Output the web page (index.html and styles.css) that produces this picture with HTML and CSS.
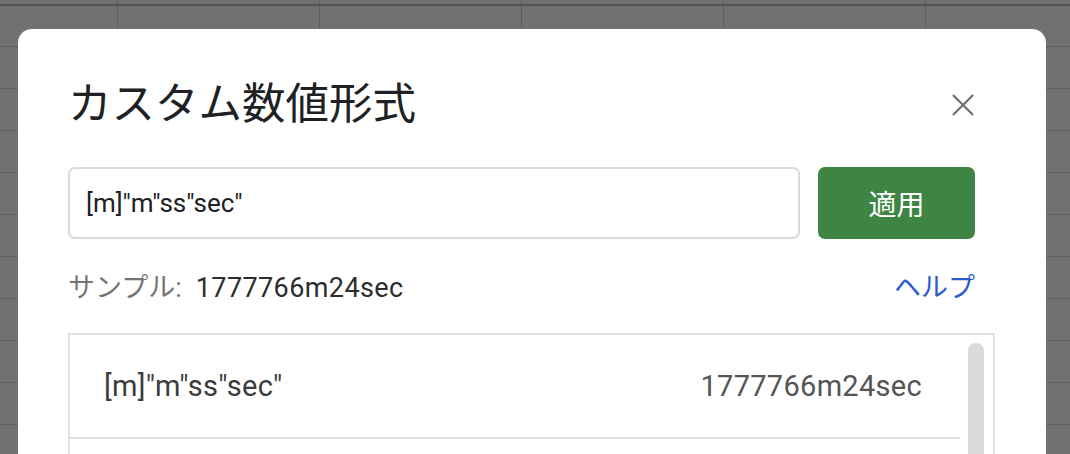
FILE: index.html
```html
<!DOCTYPE html>
<html lang="ja">
<head>
  <meta charset="UTF-8" />
  <meta name="viewport" content="width=device-width, initial-scale=1.0"/>
  <title>カスタム数値形式</title>
  <link rel="stylesheet" href="styles.css">
</head>
<body>
  <div class="sheet">
    <div class="dialog">
      <div class="dialog-head">
        <h1 class="dialog-title">カスタム数値形式</h1>
        <button class="close-btn" aria-label="閉じる">
          <svg width="24" height="24" viewBox="0 0 24 24">
            <path d="M1 1L23 23M23 1L1 23" stroke="#6b6b6b" stroke-width="2.2" fill="none"/>
          </svg>
        </button>
      </div>

      <div class="format-row">
        <div class="format-input">[m]"m"ss"sec"</div>
        <button class="apply-btn">適用</button>
      </div>

      <div class="sample-row">
        <div class="sample">
          <span class="sample-label">サンプル:</span>
          <span class="sample-value">1777766m24sec</span>
        </div>
        <a class="help-link">ヘルプ</a>
      </div>

      <div class="format-list">
        <div class="list-items">
          <div class="list-item">
            <span class="item-format">[m]"m"ss"sec"</span>
            <span class="item-sample">1777766m24sec</span>
          </div>
        </div>
        <div class="scrollbar"><div class="scroll-thumb"></div></div>
      </div>
    </div>
  </div>
</body>
</html>
```

FILE: styles.css
```css
html, body {
  margin: 0;
  padding: 0;
  height: 100%;
  overflow: hidden;
}

body {
  font-family: Roboto, "Noto Sans CJK JP", sans-serif;
  color: #202124;
}

/* spreadsheet behind the dialog */
.sheet {
  height: 100%;
  background-color: #717171;
  background-image:
    linear-gradient(#545454, #545454),
    linear-gradient(to right, #5f5f5f 1px, transparent 1px),
    linear-gradient(to bottom, #5f5f5f 1px, transparent 1px);
  background-size: 100% 2px, 202px 100%, 100% 42px;
  background-position: 0 4px, 117px 0, 0 46px;
  background-repeat: no-repeat, repeat-x, repeat-y;
  padding-top: 29px;
  box-sizing: border-box;
}

.dialog {
  margin: 0 24px 0 18px;
  height: 425px;
  background: #fff;
  border-radius: 14px 14px 0 0;
  padding: 0 51px 0 50px;
  overflow: hidden;
}

.dialog-head {
  display: flex;
  align-items: center;
  justify-content: space-between;
  padding-top: 48px;
  height: 56px;
  margin-right: 20px;
}

.dialog-title {
  margin: 0;
  font-size: 43.5px;
  font-weight: 400;
  line-height: 56px;
  color: #202124;
}

.close-btn {
  width: 48px;
  height: 48px;
  margin-right: -12px;
  border: none;
  background: none;
  padding: 0;
  display: flex;
  align-items: center;
  justify-content: center;
  cursor: pointer;
}

.close-btn svg {
  width: 22px;
  height: 22px;
}

.format-row {
  display: flex;
  gap: 18px;
  margin-top: 34px;
  margin-right: 20px;
}

.format-input {
  flex: 1;
  height: 72px;
  box-sizing: border-box;
  border: 2px solid #dadada;
  border-radius: 7px;
  padding: 0 16px;
  display: flex;
  align-items: center;
  font-size: 26px;
  color: #202124;
}

.apply-btn {
  width: 157px;
  height: 72px;
  border: none;
  border-radius: 7px;
  background: #3e8544;
  color: #fff;
  font-family: "Noto Sans CJK JP", sans-serif;
  font-size: 28px;
  cursor: pointer;
}

.sample-row {
  display: flex;
  align-items: center;
  justify-content: space-between;
  height: 36px;
  margin-top: 28px;
  margin-right: 20px;
  font-size: 27px;
}

.sample {
  display: flex;
  align-items: baseline;
  gap: 14px;
}

.sample-label {
  color: #757575;
}

.sample-value {
  color: #2d2d2d;
  letter-spacing: 0.4px;
}

.help-link {
  color: #2b5bcd;
  cursor: pointer;
}

.format-list {
  margin-top: 30px;
  border: 2px solid #e2e2e2;
  height: 200px;
  display: flex;
}

.list-items {
  flex: 1;
}

.list-item {
  display: flex;
  align-items: center;
  justify-content: space-between;
  height: 102px;
  padding: 0 38px 0 34px;
  border-bottom: 2px solid #e2e2e2;
  font-size: 29px;
  letter-spacing: 0.3px;
}

.item-format {
  color: #3c3c3c;
}

.item-sample {
  color: #555;
}

.scrollbar {
  width: 33px;
  padding: 8px 9px 0 8px;
  box-sizing: border-box;
}

.scroll-thumb {
  height: 300px;
  background: #dadada;
  border-radius: 8px;
}
```
